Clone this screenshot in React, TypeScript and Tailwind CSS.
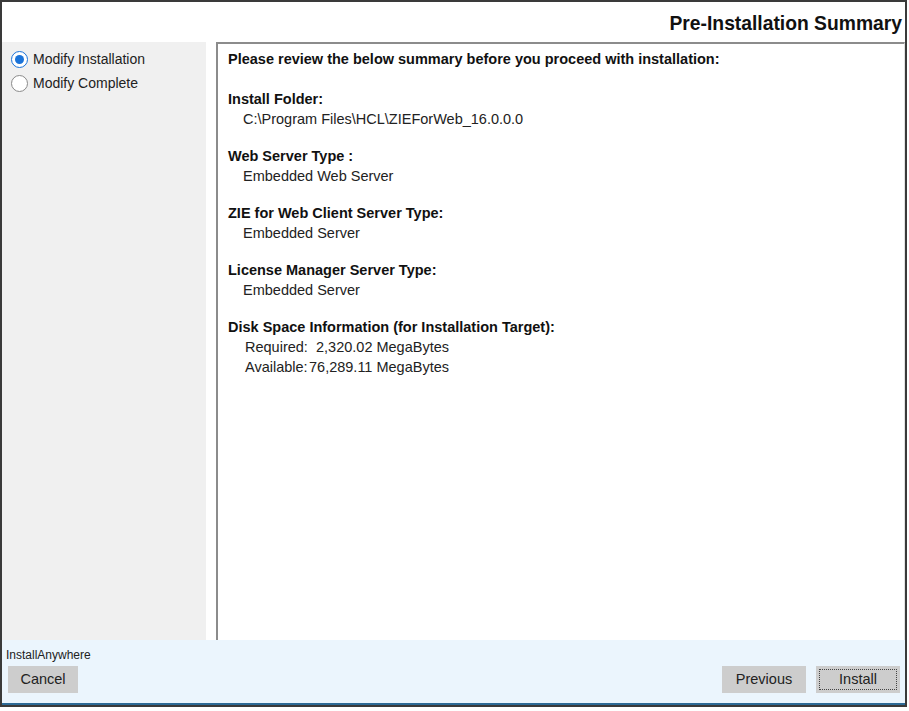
import React from "react";

type Section = {
	title: string;
	lines: string[];
};

const sections: Section[] = [
	{ title: "Install Folder:", lines: ["C:\\Program Files\\HCL\\ZIEForWeb_16.0.0.0"] },
	{ title: "Web Server Type :", lines: ["Embedded Web Server"] },
	{ title: "ZIE for Web Client Server Type:", lines: ["Embedded Server"] },
	{ title: "License Manager Server Type:", lines: ["Embedded Server"] },
];

function Radio({ checked, label }: { checked?: boolean; label: string }) {
	return (
		<label className="flex h-6 items-center gap-[5px]">
			<span
				className={
					checked
						? "flex size-[17px] items-center justify-center rounded-full border border-[#1a73d9] bg-white"
						: "flex size-[17px] items-center justify-center rounded-full border border-[#8a8a8a] bg-white"
				}
			>
				{checked && <span className="size-[9px] rounded-full bg-[#1a73d9]" />}
			</span>
			<span className="text-[14px] text-[#222]">{label}</span>
		</label>
	);
}

function Button({ label, focused }: { label: string; focused?: boolean }) {
	return (
		<button className="flex h-[27px] w-full items-center justify-center bg-[#cdcdcd] px-[3px] text-[14.5px] text-[#222]">
			<span
				className={
					focused
						? "flex h-[21px] w-full items-center justify-center border border-dotted border-[#444]"
						: "flex h-[21px] w-full items-center justify-center"
				}
			>
				{label}
			</span>
		</button>
	);
}

export default function App() {
	return (
		<div className="h-[711px] w-[909px] bg-white font-['Liberation_Sans',Arial,sans-serif]">
			<div className="flex h-[707px] w-[907px] flex-col border-2 border-b-0 border-[#3a3a3a] bg-white">
				<header className="flex h-[40px] shrink-0 items-end justify-end pr-[3px] pb-[3px]">
					<h1 className="text-[19.3px] font-bold text-[#111]">Pre-Installation Summary</h1>
				</header>

				<div className="flex min-h-0 flex-1">
					<aside className="w-[204px] shrink-0 bg-[#f0f0f0] px-[9px] pt-[5px]">
						<Radio checked label="Modify Installation" />
						<Radio label="Modify Complete" />
					</aside>

					<main className="ml-[10px] flex-1 border-t-2 border-l-2 border-[#8c8c8c] border-r border-r-[#e2e2e2] pl-[10px] pt-[6px] text-[14.5px] text-[#111]">
						<p className="font-bold leading-[18px]">
							Please review the below summary before you proceed with installation:
						</p>

						{sections.map((s, i) => (
							<section key={s.title} className={i === 0 ? "mt-[21px]" : "mt-[17px]"}>
								<h2 className="font-bold leading-[20px]">{s.title}</h2>
								{s.lines.map((l) => (
									<div key={l} className="pl-[15px] leading-[20px] text-[#222]">
										{l}
									</div>
								))}
							</section>
						))}

						<section className="mt-[17px]">
							<h2 className="font-bold leading-[20px]">Disk Space Information (for Installation Target):</h2>
							<div className="pl-[17px] leading-[20px] text-[#222]">
								<div className="flex">
									<span className="w-[71px] shrink-0">Required:</span>
									<span>2,320.02 MegaBytes</span>
								</div>
								<div className="flex">
									<span className="w-[64px] shrink-0">Available:</span>
									<span>76,289.11 MegaBytes</span>
								</div>
							</div>
						</section>
					</main>
				</div>

				<footer className="flex h-[63px] shrink-0 flex-col bg-[#ebf5fd] px-[4px] pt-[8px]">
					<div className="text-[12px] leading-[14px] text-[#222]">InstallAnywhere</div>
					<div className="mt-[4px] flex items-center">
						<div className="w-[72px] pl-[2px]">
							<Button label="Cancel" />
						</div>
						<div className="ml-auto flex gap-[10px] pr-[1px]">
							<div className="w-[84px]">
								<Button label="Previous" />
							</div>
							<div className="w-[84px]">
								<Button label="Install" focused />
							</div>
						</div>
					</div>
				</footer>
				<div className="h-[2px] shrink-0 bg-[#2d6a96]" />
				<div className="h-[2px] shrink-0 bg-[#3a3a3a]" />
			</div>
		</div>
	);
}
